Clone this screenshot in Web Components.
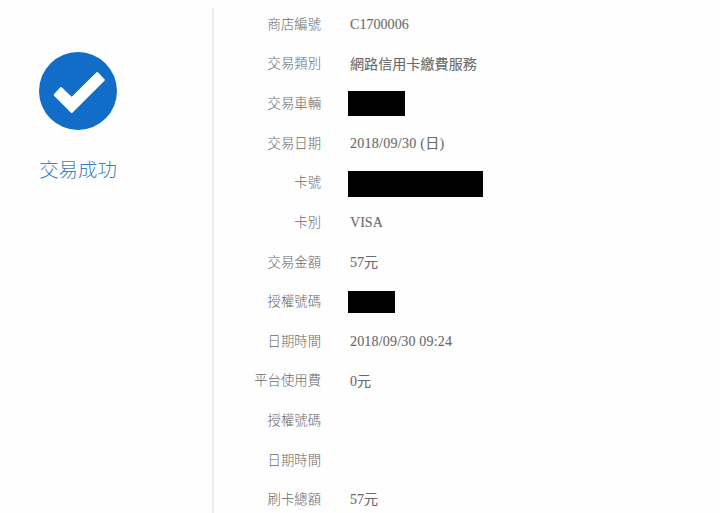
<!DOCTYPE html>
<html lang="zh-Hant">
<head>
<meta charset="utf-8">
<title>交易成功</title>
<style>
html,body{margin:0;height:100%;overflow:hidden;background:#fefefe}
</style>
</head>
<body>
<receipt-page></receipt-page>
<script>
class ReceiptPage extends HTMLElement {
  constructor() {
    super();
    this.attachShadow({mode:'open'}).innerHTML = `
<style>
:host{display:grid;grid-template-columns:212px 1fr;width:720px;height:513px;overflow:hidden;font-family:"Liberation Serif","Noto Sans CJK TC",serif}
main{margin-top:8px;border-left:2px solid #ebebeb;height:505px}
</style>
<receipt-status>交易成功</receipt-status>
<main>
<receipt-row label="商店編號">C1700006</receipt-row>
<receipt-row label="交易類別" style="--dy:1px">網路信用卡繳費服務</receipt-row>
<receipt-row label="交易車輛"><redacted-bar style="--w:57px;--h:25px;--x:-2px"></redacted-bar></receipt-row>
<receipt-row label="交易日期" style="--ls:.23px">2018/09/30 (日)</receipt-row>
<receipt-row label="卡號"><redacted-bar style="--w:135px;--h:26px;--x:-2px;--y:4px"></redacted-bar></receipt-row>
<receipt-row label="卡別">VISA</receipt-row>
<receipt-row label="交易金額">57元</receipt-row>
<receipt-row label="授權號碼"><redacted-bar style="--w:47px;--h:22px;--x:-2px;--y:2px"></redacted-bar></receipt-row>
<receipt-row label="日期時間" style="--ls:.14px">2018/09/30 09:24</receipt-row>
<receipt-row label="平台使用費" style="--dy:1px">0元</receipt-row>
<receipt-row label="授權號碼"></receipt-row>
<receipt-row label="日期時間"></receipt-row>
<receipt-row label="刷卡總額">57元</receipt-row>
</main>`;
  }
}
class ReceiptStatus extends HTMLElement {
  constructor() {
    super();
    this.attachShadow({mode:'open'}).innerHTML = `
<style>
:host{display:flex;flex-direction:column;align-items:center;width:156px;padding-top:52px;box-sizing:border-box;color:#3b7fc0;font-size:19.4px;font-weight:300;line-height:28px}
svg{width:78px;height:78px;margin-bottom:27px;flex:none}
</style>
<svg viewBox="0 0 78 78"><circle cx="39" cy="39" r="39" fill="#126dc9"/><path d="M22 36 32.7 46.3 58.2 21 64.8 28 32.7 60 15.7 43Z" fill="#fff" stroke="#fff" stroke-width="2" stroke-linejoin="round"/></svg>
<slot></slot>`;
  }
}
class ReceiptRow extends HTMLElement {
  constructor() {
    super();
    this.attachShadow({mode:'open'}).innerHTML = `
<style>
:host{display:grid;grid-template-columns:107px 1fr;column-gap:29px;align-items:center;height:39.63px;margin-top:0;position:relative;top:-4px;line-height:20px}
.label{padding-top:2px;text-align:right;font-size:13.35px;font-weight:300;color:#686868;white-space:nowrap}
.value{padding-top:var(--dy,0);font-size:14.1px;color:#6a6a6a;-webkit-text-stroke:.1px #6a6a6a;letter-spacing:var(--ls,0);white-space:nowrap}
</style>
<span class="label"></span><span class="value"><slot></slot></span>`;
  }
  connectedCallback() {
    this.shadowRoot.querySelector('.label').textContent = this.getAttribute('label');
  }
}
class RedactedBar extends HTMLElement {
  constructor() {
    super();
    this.attachShadow({mode:'open'}).innerHTML = `
<style>
:host{display:block;width:var(--w);height:var(--h);margin-left:var(--x,0);margin-top:var(--y,0);background:#000}
</style>`;
  }
}
customElements.define('redacted-bar', RedactedBar);
customElements.define('receipt-row', ReceiptRow);
customElements.define('receipt-status', ReceiptStatus);
customElements.define('receipt-page', ReceiptPage);
</script>
</body>
</html>
